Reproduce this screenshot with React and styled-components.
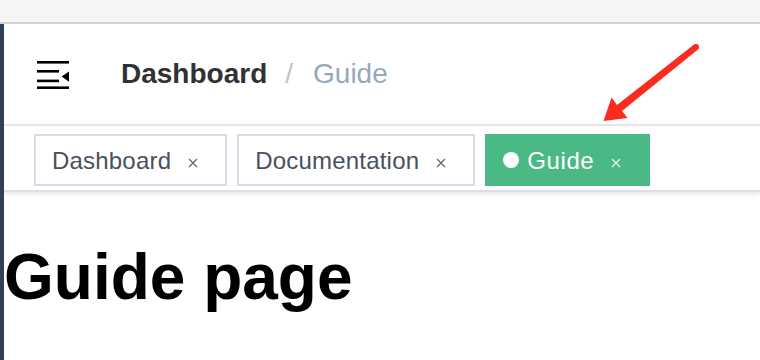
import React from 'react'
import styled, { createGlobalStyle } from 'styled-components'

const GlobalStyle = createGlobalStyle`
  html, body {
    margin: 0;
    padding: 0;
    background: #fff;
    font-family: 'Liberation Sans', Helvetica, Arial, sans-serif;
  }
  #root {
    width: 760px;
    height: 360px;
    overflow: hidden;
    position: relative;
  }
`

const tags = [
  { title: 'Dashboard', active: false },
  { title: 'Documentation', active: false },
  { title: 'Guide', active: true },
]

function HamburgerIcon() {
  return (
    <svg width="32" height="28" viewBox="0 0 32 28" fill="#000">
      <rect x="0" y="0" width="32" height="2.6" />
      <rect x="0" y="9" width="22" height="2.6" />
      <rect x="0" y="18.6" width="22" height="2.6" />
      <path d="M24.6 15.6 L32 10.4 V20.8 Z" />
      <rect x="0" y="25.4" width="32" height="2.6" />
    </svg>
  )
}

function CloseIcon() {
  return (
    <svg width="10" height="10" viewBox="0 0 10 10">
      <path d="M1 1 L9 9 M9 1 L1 9" stroke="currentColor" strokeWidth="1.3" />
    </svg>
  )
}

function Arrow() {
  return (
    <ArrowLayer width="760" height="360" viewBox="0 0 760 360">
      <polygon
        fill="#fb2b1f"
        points="694.1,44.6 617,104.9 611.5,97.5 603.5,121 627.5,118 622,111.1 697.9,49.4"
      />
      <circle cx="696" cy="47" r="3.05" fill="#fb2b1f" />
    </ArrowLayer>
  )
}

function App() {
  return (
    <>
      <GlobalStyle />
      <TopStrip />
      <Layout>
        <Sidebar />
        <Main>
          <Navbar>
            <Hamburger>
              <HamburgerIcon />
            </Hamburger>
            <Breadcrumb>
              <Crumb>Dashboard</Crumb>
              <Separator>/</Separator>
              <Crumb current>Guide</Crumb>
            </Breadcrumb>
          </Navbar>
          <TagsView>
            {tags.map((tag) => (
              <Tag key={tag.title} active={tag.active}>
                {tag.active && <Dot />}
                {tag.title}
                <Close>
                  <CloseIcon />
                </Close>
              </Tag>
            ))}
          </TagsView>
          <Title>Guide page</Title>
        </Main>
      </Layout>
      <Arrow />
    </>
  )
}

export default App

const TopStrip = styled.div`
  height: 22px;
  background: #f5f5f5;
  border-bottom: 2px solid #d2d2d2;
`

const Layout = styled.div`
  display: flex;
  height: 336px;
`

const Sidebar = styled.div`
  width: 4px;
  flex-shrink: 0;
  background: #304156;
`

const Main = styled.div`
  flex: 1;
  display: flex;
  flex-direction: column;
  min-width: 0;
`

const Navbar = styled.div`
  height: 100px;
  display: flex;
  align-items: center;
  border-bottom: 2px solid #e8e8e8;
  background: #fff;
`

const Hamburger = styled.div`
  display: flex;
  align-items: center;
  padding: 2px 0 0 33px;
  width: 83px;
  box-sizing: border-box;
`

const Breadcrumb = styled.div`
  margin-left: 34px;
  display: flex;
  align-items: center;
  font-size: 28px;
  line-height: 100px;
`

const Crumb = styled.span`
  font-weight: ${(p) => (p.current ? 400 : 700)};
  color: ${(p) => (p.current ? '#97a8be' : '#303133')};
`

const Separator = styled.span`
  margin: 0 20px 0 18px;
  color: #c0c4cc;
  font-weight: 400;
`

const TagsView = styled.div`
  height: 66px;
  display: flex;
  align-items: flex-start;
  gap: 10px;
  padding: 8px 0 0 30px;
  box-sizing: border-box;
  border-bottom: 2px solid #dcdfe6;
  box-shadow: 0 2px 4px rgba(0, 0, 0, 0.1);
  background: #fff;
  position: relative;
`

const Tag = styled.div`
  height: 52px;
  box-sizing: border-box;
  display: flex;
  align-items: center;
  padding: 2px 16px 0;
  font-size: 24px;
  letter-spacing: ${(p) => (p.active ? '0.6px' : '0.2px')};
  border: 2px solid ${(p) => (p.active ? '#4ab986' : '#d8dce5')};
  background: ${(p) => (p.active ? '#4ab986' : '#fff')};
  color: ${(p) => (p.active ? '#fff' : '#495060')};
`

const Dot = styled.span`
  width: 16px;
  height: 16px;
  border-radius: 50%;
  background: #fff;
  margin-right: 8px;
  margin-top: -2px;
`

const Close = styled.span`
  width: 32px;
  display: flex;
  justify-content: center;
  align-items: center;
  margin-left: 6px;
  padding-top: 3px;
  opacity: 0.85;
`

const Title = styled.h1`
  margin: 48px 0 0;
  font-size: 64px;
  font-weight: 700;
  color: #000;
  line-height: normal;
`

const ArrowLayer = styled.svg`
  position: absolute;
  top: 0;
  left: 0;
  pointer-events: none;
`
